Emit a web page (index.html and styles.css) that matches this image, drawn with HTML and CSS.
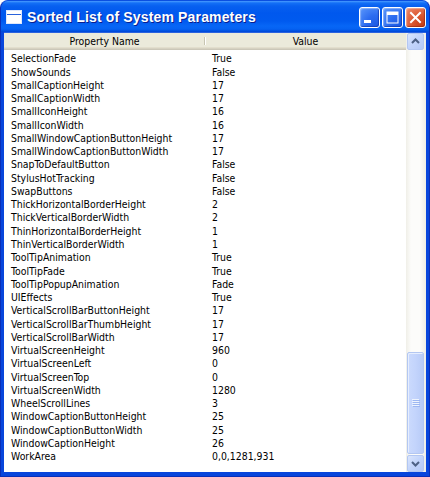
FILE: index.html
```html
<!DOCTYPE html>
<html>
<head>
<meta charset="utf-8">
<link rel="stylesheet" href="styles.css">
</head>
<body>
<div class="window">
  <div class="titlebar">
    <svg class="app-icon" width="16" height="14" viewBox="0 0 16 14">
      <rect x="0.5" y="0.5" width="15" height="13" fill="#ffffff" stroke="#dfe8fb"/>
      <rect x="1" y="1" width="14" height="3" fill="#ffffff"/>
      <line x1="1" y1="4.5" x2="15" y2="4.5" stroke="#2a63dc" stroke-width="1"/>
      <rect x="1" y="5" width="14" height="8" fill="#ffffff"/>
    </svg>
    <div class="title">Sorted List of System Parameters</div>
    <div class="caption-buttons">
      <div class="cbtn">
        <svg width="21" height="21" viewBox="0 0 21 21"><rect x="5" y="13" width="7" height="3" fill="#fff"/></svg>
      </div>
      <div class="cbtn">
        <svg width="21" height="21" viewBox="0 0 21 21"><rect x="5" y="5" width="11" height="11" fill="none" stroke="#fff" stroke-width="1"/><rect x="5" y="5" width="11" height="3" fill="#fff"/></svg>
      </div>
      <div class="cbtn close">
        <svg width="21" height="21" viewBox="0 0 21 21"><path d="M6 6 L15 15 M15 6 L6 15" stroke="#fff" stroke-width="2" stroke-linecap="square"/></svg>
      </div>
    </div>
  </div>
  <div class="client">
    <div class="list">
      <div class="header">
        <div class="hcell">Property Name</div>
        <div class="hcell">Value</div>
      </div>
      <div class="rows">
        <div class="row"><span>SelectionFade</span><span>True</span></div>
        <div class="row"><span>ShowSounds</span><span>False</span></div>
        <div class="row"><span>SmallCaptionHeight</span><span>17</span></div>
        <div class="row"><span>SmallCaptionWidth</span><span>17</span></div>
        <div class="row"><span>SmallIconHeight</span><span>16</span></div>
        <div class="row"><span>SmallIconWidth</span><span>16</span></div>
        <div class="row"><span>SmallWindowCaptionButtonHeight</span><span>17</span></div>
        <div class="row"><span>SmallWindowCaptionButtonWidth</span><span>17</span></div>
        <div class="row"><span>SnapToDefaultButton</span><span>False</span></div>
        <div class="row"><span>StylusHotTracking</span><span>False</span></div>
        <div class="row"><span>SwapButtons</span><span>False</span></div>
        <div class="row"><span>ThickHorizontalBorderHeight</span><span>2</span></div>
        <div class="row"><span>ThickVerticalBorderWidth</span><span>2</span></div>
        <div class="row"><span>ThinHorizontalBorderHeight</span><span>1</span></div>
        <div class="row"><span>ThinVerticalBorderWidth</span><span>1</span></div>
        <div class="row"><span>ToolTipAnimation</span><span>True</span></div>
        <div class="row"><span>ToolTipFade</span><span>True</span></div>
        <div class="row"><span>ToolTipPopupAnimation</span><span>Fade</span></div>
        <div class="row"><span>UIEffects</span><span>True</span></div>
        <div class="row"><span>VerticalScrollBarButtonHeight</span><span>17</span></div>
        <div class="row"><span>VerticalScrollBarThumbHeight</span><span>17</span></div>
        <div class="row"><span>VerticalScrollBarWidth</span><span>17</span></div>
        <div class="row"><span>VirtualScreenHeight</span><span>960</span></div>
        <div class="row"><span>VirtualScreenLeft</span><span>0</span></div>
        <div class="row"><span>VirtualScreenTop</span><span>0</span></div>
        <div class="row"><span>VirtualScreenWidth</span><span>1280</span></div>
        <div class="row"><span>WheelScrollLines</span><span>3</span></div>
        <div class="row"><span>WindowCaptionButtonHeight</span><span>25</span></div>
        <div class="row"><span>WindowCaptionButtonWidth</span><span>25</span></div>
        <div class="row"><span>WindowCaptionHeight</span><span>26</span></div>
        <div class="row"><span>WorkArea</span><span>0,0,1281,931</span></div>
      </div>
    </div>
    <div class="scrollbar">
      <div class="sbtn">
        <svg width="17" height="17" viewBox="0 0 17 17"><path d="M5 10 L8.5 6.5 L12 10" fill="none" stroke="#4d6185" stroke-width="2"/></svg>
      </div>
      <div class="track">
        <div class="thumb">
          <svg width="8" height="8" viewBox="0 0 8 8">
            <line x1="0" y1="0.5" x2="7" y2="0.5" stroke="#eef4fe"/>
            <line x1="1" y1="1.5" x2="8" y2="1.5" stroke="#9db7f2"/>
            <line x1="0" y1="2.5" x2="7" y2="2.5" stroke="#eef4fe"/>
            <line x1="1" y1="3.5" x2="8" y2="3.5" stroke="#9db7f2"/>
            <line x1="0" y1="4.5" x2="7" y2="4.5" stroke="#eef4fe"/>
            <line x1="1" y1="5.5" x2="8" y2="5.5" stroke="#9db7f2"/>
            <line x1="0" y1="6.5" x2="7" y2="6.5" stroke="#eef4fe"/>
            <line x1="1" y1="7.5" x2="8" y2="7.5" stroke="#9db7f2"/>
          </svg>
        </div>
      </div>
      <div class="sbtn">
        <svg width="17" height="17" viewBox="0 0 17 17"><path d="M5 7 L8.5 10.5 L12 7" fill="none" stroke="#4d6185" stroke-width="2"/></svg>
      </div>
    </div>
  </div>
</div>
</body>
</html>
```

FILE: styles.css
```css
html, body {
  margin: 0;
  padding: 0;
  background: #ffffff;
}

.window {
  width: 430px;
  height: 477px;
  display: flex;
  flex-direction: column;
  background: #0846dc;
  border-radius: 8px 8px 0 0;
  box-sizing: border-box;
  border: 1px solid #0a2fb8;
  border-top-color: #0b4fe0;
}

.titlebar {
  height: 31px;
  flex: none;
  display: flex;
  align-items: center;
  border-radius: 7px 7px 0 0;
  background: linear-gradient(to bottom,
    #4a9cff 0px, #1470f6 2px, #0860f0 5px, #0058ee 12px,
    #005aef 20px, #0766f6 25px, #0562f2 28px, #0050e0 30px, #0046d5 31px);
  padding: 0 3px 0 5px;
}

.app-icon {
  flex: none;
  margin-right: 5px;
  margin-top: 1px;
}

.title {
  flex: 1;
  font-family: "Liberation Sans", Arial, sans-serif;
  font-weight: bold;
  font-size: 14px;
  color: #ffffff;
  text-shadow: 1px 1px 0 #0a1f8f;
  letter-spacing: 0.15px;
  white-space: nowrap;
}

.caption-buttons {
  display: flex;
  gap: 2px;
  margin-top: 1px;
}

.cbtn {
  width: 21px;
  height: 21px;
  box-sizing: border-box;
  border: 1px solid #ffffff;
  border-radius: 3px;
  background: radial-gradient(circle at 80% 85%, #1f5ee6 0%, #2c6cf0 40%, #5c98fb 100%);
  box-shadow: inset -1px -1px 1px rgba(0, 30, 140, 0.5), inset 1px 1px 1px rgba(255, 255, 255, 0.35);
  display: flex;
  align-items: center;
  justify-content: center;
  overflow: hidden;
}

.cbtn svg {
  flex: none;
  margin: -1px;
}

.cbtn.close {
  background: radial-gradient(circle at 80% 85%, #c7401a 0%, #dc5a33 45%, #ef8e70 100%);
  box-shadow: inset -1px -1px 1px rgba(120, 20, 0, 0.5), inset 1px 1px 1px rgba(255, 255, 255, 0.35);
}

.client {
  flex: 1;
  display: flex;
  margin: 0 3px 4px 3px;
  border-top: 1px solid #2a62df;
  background: #ffffff;
  min-height: 0;
}

.list {
  width: 402px;
  flex: none;
  display: flex;
  flex-direction: column;
  background: #ffffff;
  font-family: "DejaVu Sans Condensed", "DejaVu Sans", sans-serif;
  font-stretch: condensed;
  font-size: 10.4px;
  color: #000000;
}

.header {
  height: 17px;
  flex: none;
  display: grid;
  grid-template-columns: 201px 1fr;
  background: #ebeadb;
  box-shadow: inset 0 -1px 0 #cbc7b8, inset 0 -2px 0 #d6d2c2, inset 0 -3px 0 #e2decd;
}

.hcell {
  display: flex;
  align-items: center;
  justify-content: center;
  padding-bottom: 2px;
  position: relative;
}

.hcell:first-child::after {
  content: "";
  position: absolute;
  right: 0;
  top: 4px;
  bottom: 5px;
  width: 1px;
  background: #c7c5b2;
  box-shadow: 1px 0 0 #ffffff;
}

.rows {
  padding-top: 2.3px;
}

.row {
  display: grid;
  grid-template-columns: 201px 1fr;
  height: 13.27px;
  line-height: 13.27px;
  white-space: nowrap;
}

.row span {
  padding-left: 7px;
}

.scrollbar {
  flex: 1;
  display: flex;
  flex-direction: column;
  background: linear-gradient(to right, #f0efe8, #fcfcfa 25%, #fcfcfa 70%, #eeede5);
  padding: 0 1px 0 0;
}

.sbtn {
  width: 17px;
  height: 17px;
  box-sizing: border-box;
  flex: none;
  border: 1px solid #b3c7f2;
  border-radius: 2px;
  background: linear-gradient(to bottom right, #dbe6fd, #c2d4fb 50%, #b5c9f6);
  display: flex;
  align-items: center;
  justify-content: center;
  margin-left: 1px;
}

.sbtn svg {
  flex: none;
  margin: -1px;
}

.track {
  flex: 1;
  display: flex;
  flex-direction: column;
  justify-content: flex-end;
  padding-bottom: 1px;
}

.thumb {
  height: 102px;
  width: 17px;
  margin-left: 1px;
  box-sizing: border-box;
  border: 1px solid #b3c7f2;
  border-radius: 2px;
  background: linear-gradient(to right, #cbdafd, #c3d4fc 50%, #b8cbf7);
  box-shadow: inset 1px 1px 0 #e6eefe;
  display: flex;
  align-items: center;
  justify-content: center;
}
```
